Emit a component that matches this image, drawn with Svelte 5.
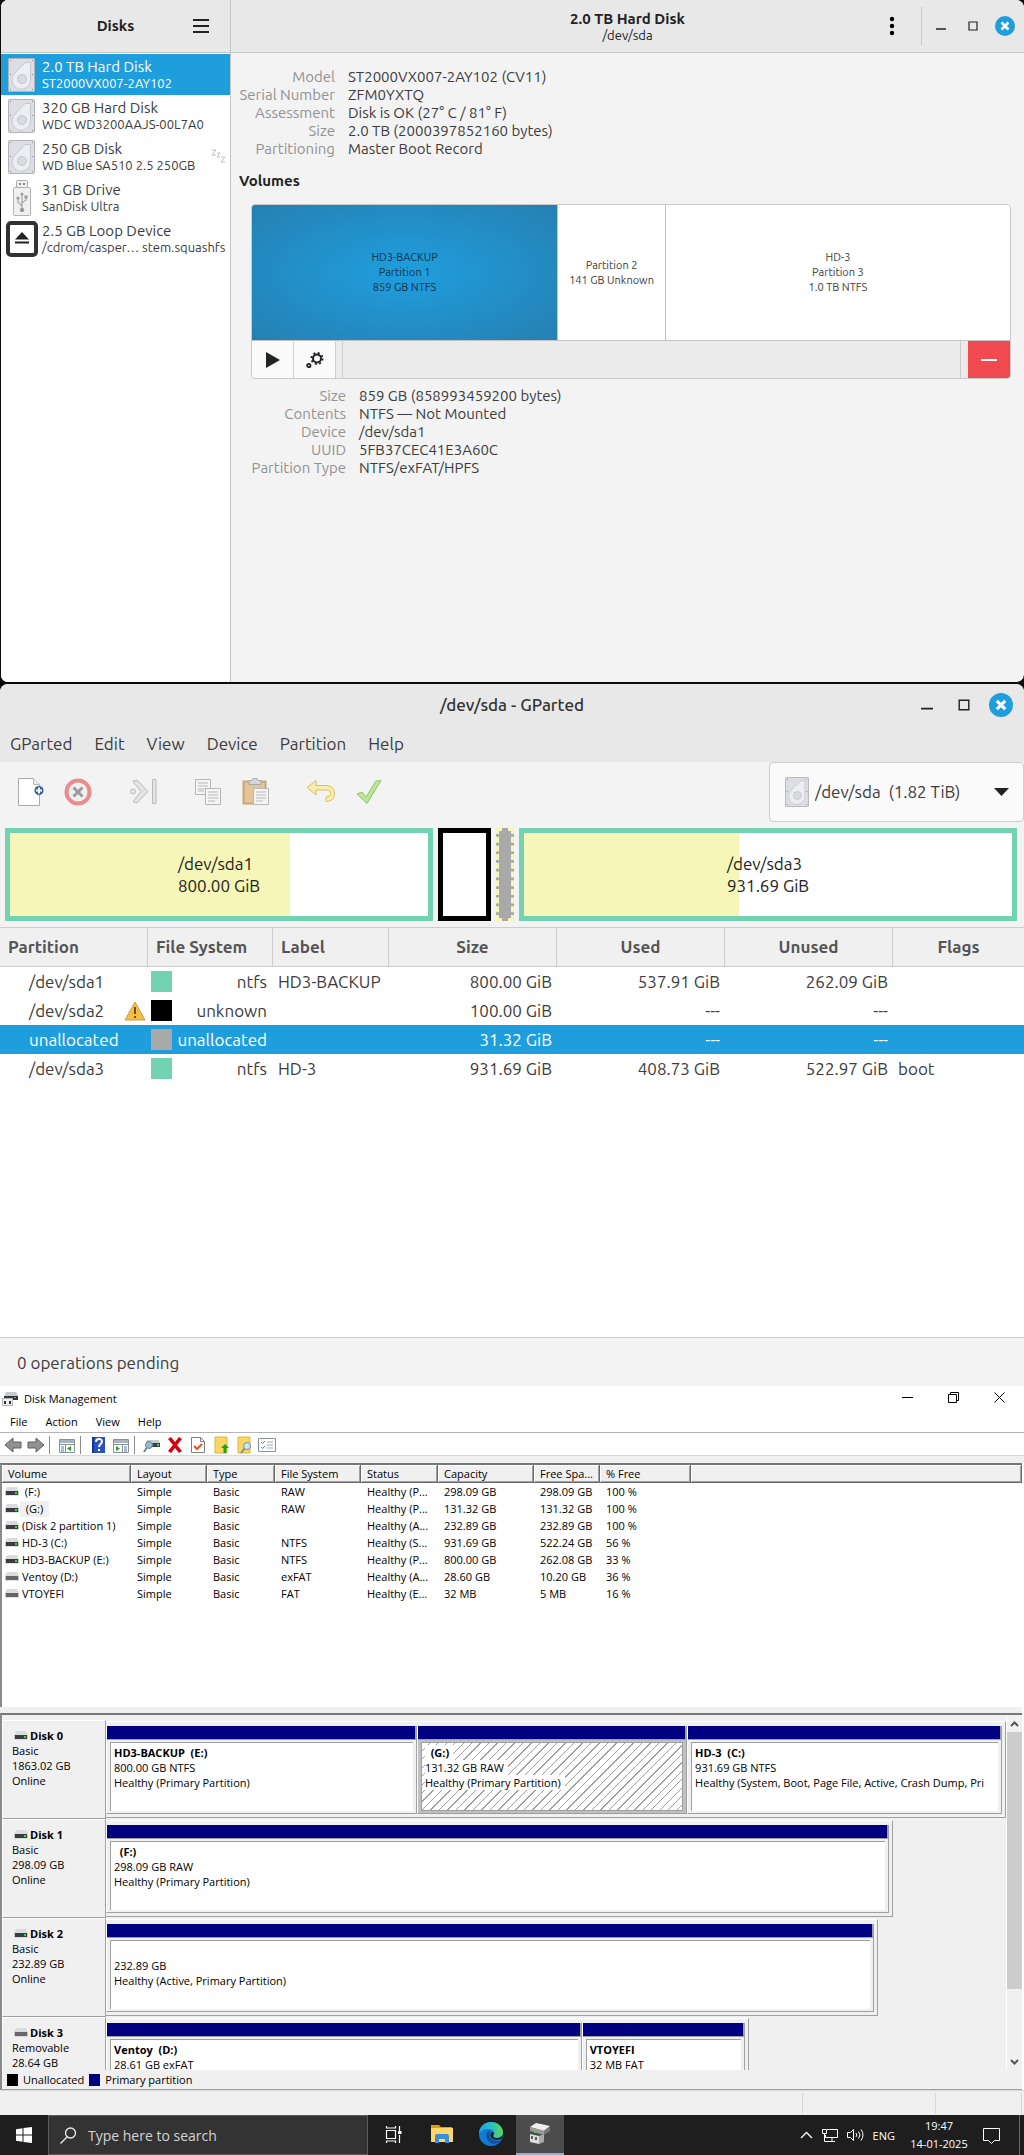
<script lang="ts">
	const drives = [
		{ name: '2.0 TB Hard Disk', model: 'ST2000VX007-2AY102', icon: 'hdd' },
		{ name: '320 GB Hard Disk', model: 'WDC WD3200AAJS-00L7A0', icon: 'hdd' },
		{ name: '250 GB Disk', model: 'WD Blue SA510 2.5 250GB', icon: 'hdd', asleep: true },
		{ name: '31 GB Drive', model: 'SanDisk Ultra', icon: 'usb' },
		{ name: '2.5 GB Loop Device', model: '/cdrom/casper… stem.squashfs', icon: 'loop' }
	];

	const driveInfo = [
		['Model', 'ST2000VX007-2AY102 (CV11)'],
		['Serial Number', 'ZFM0YXTQ'],
		['Assessment', 'Disk is OK (27° C / 81° F)'],
		['Size', '2.0 TB (2000397852160 bytes)'],
		['Partitioning', 'Master Boot Record']
	];

	const volumes = [
		{ lines: ['HD3-BACKUP', 'Partition 1', '859 GB NTFS'], share: 306 },
		{ lines: ['Partition 2', '141 GB Unknown'], share: 107 },
		{ lines: ['HD-3', 'Partition 3', '1.0 TB NTFS'], share: 345 }
	];

	const volumeInfo = [
		['Size', '859 GB (858993459200 bytes)'],
		['Contents', 'NTFS — Not Mounted'],
		['Device', '/dev/sda1'],
		['UUID', '5FB37CEC41E3A60C'],
		['Partition Type', 'NTFS/exFAT/HPFS']
	];

	const gpartedMenus = ['GParted', 'Edit', 'View', 'Device', 'Partition', 'Help'];

	const gpartedBars = [
		{ kind: 'ntfs', name: '/dev/sda1', size: '800.00 GiB', share: 418, used: 67 },
		{ kind: 'unknown', name: '', size: '', share: 43, used: 0 },
		{ kind: 'unallocated', name: '', size: '', share: 12, used: 0 },
		{ kind: 'ntfs', name: '/dev/sda3', size: '931.69 GiB', share: 488, used: 44 }
	];

	const partitions = [
		{ name: '/dev/sda1', fs: 'ntfs', label: 'HD3-BACKUP', size: '800.00 GiB', used: '537.91 GiB', unused: '262.09 GiB', flags: '' },
		{ name: '/dev/sda2', fs: 'unknown', label: '', size: '100.00 GiB', used: '---', unused: '---', flags: '', warn: true },
		{ name: 'unallocated', fs: 'unallocated', label: '', size: '31.32 GiB', used: '---', unused: '---', flags: '' },
		{ name: '/dev/sda3', fs: 'ntfs', label: 'HD-3', size: '931.69 GiB', used: '408.73 GiB', unused: '522.97 GiB', flags: 'boot' }
	];

	const mmcMenus = ['File', 'Action', 'View', 'Help'];
	const mmcTools = ['back', 'forward', '|', 'tree', '|', 'help', 'panel', '|', 'connect', 'delete', 'check', 'up', 'find', 'list'];
	const volumeColumns = ['Volume', 'Layout', 'Type', 'File System', 'Status', 'Capacity', 'Free Spa...', '% Free'];

	const volumeRows = [
		[' (F:)', 'Simple', 'Basic', 'RAW', 'Healthy (P...', '298.09 GB', '298.09 GB', '100 %'],
		[' (G:)', 'Simple', 'Basic', 'RAW', 'Healthy (P...', '131.32 GB', '131.32 GB', '100 %'],
		['(Disk 2 partition 1)', 'Simple', 'Basic', '', 'Healthy (A...', '232.89 GB', '232.89 GB', '100 %'],
		['HD-3 (C:)', 'Simple', 'Basic', 'NTFS', 'Healthy (S...', '931.69 GB', '522.24 GB', '56 %'],
		['HD3-BACKUP (E:)', 'Simple', 'Basic', 'NTFS', 'Healthy (P...', '800.00 GB', '262.08 GB', '33 %'],
		['Ventoy (D:)', 'Simple', 'Basic', 'exFAT', 'Healthy (A...', '28.60 GB', '10.20 GB', '36 %'],
		['VTOYEFI', 'Simple', 'Basic', 'FAT', 'Healthy (E...', '32 MB', '5 MB', '16 %']
	];

	const disks = [
		{
			name: 'Disk 0', type: 'Basic', size: '1863.02 GB', state: 'Online', width: 100,
			parts: [
				{ name: 'HD3-BACKUP  (E:)', size: '800.00 GB NTFS', status: 'Healthy (Primary Partition)', share: 311 },
				{ name: '  (G:)', size: '131.32 GB RAW', status: 'Healthy (Primary Partition)', share: 270, selected: true },
				{ name: 'HD-3  (C:)', size: '931.69 GB NTFS', status: 'Healthy (System, Boot, Page File, Active, Crash Dump, Pri', share: 315 }
			]
		},
		{
			name: 'Disk 1', type: 'Basic', size: '298.09 GB', state: 'Online', width: 87.4,
			parts: [{ name: '  (F:)', size: '298.09 GB RAW', status: 'Healthy (Primary Partition)', share: 1 }]
		},
		{
			name: 'Disk 2', type: 'Basic', size: '232.89 GB', state: 'Online', width: 85.8,
			parts: [{ name: ' ', size: '232.89 GB', status: 'Healthy (Active, Primary Partition)', share: 1 }]
		},
		{
			name: 'Disk 3', type: 'Removable', size: '28.64 GB', state: '', width: 71.4, removable: true,
			parts: [
				{ name: 'Ventoy  (D:)', size: '28.61 GB exFAT', status: '', share: 477 },
				{ name: 'VTOYEFI', size: '32 MB FAT', status: '', share: 162 }
			]
		}
	];

	let selectedDrive = $state(0);
	let selectedVolume = $state(0);
	let selectedPartition = $state(2);
	let search = $state('');
</script>

{#snippet hdd()}
	<svg class="hdd" viewBox="0 0 27 34" aria-hidden="true">
		<rect x=".5" y=".5" width="26" height="33" rx="1" fill="#dcdee3" stroke="#b0b2b8" />
		<path d="M17 4.5h5.5v17.500a9.200 9.200 0 1 1-16.800-5.200C8 13 13.500 9 17 4.500z" fill="#eceef2" stroke="#c6c8ce" />
		<circle cx="14" cy="21" r="4.500" fill="#d9dbe0" stroke="#c3c5cb" />
		<path d="M2 2h1v1H2zM24 2h1v1h-1zM2 16h1v1H2zM24 16h1v1h-1zM2 31h1v1H2zM24 31h1v1h-1z" fill="#85878d" />
	</svg>
{/snippet}

{#snippet controls(size: number)}
	<button type="button" aria-label="Minimize">
		<svg width={size} height={size} viewBox="0 0 20 20"><path d="M5 13h10" stroke="#222" stroke-width="1.500" /></svg>
	</button>
	<button type="button" aria-label="Maximize">
		<svg width={size} height={size} viewBox="0 0 20 20"><path d="M6 6h8v8H6z" fill="none" stroke="#222" stroke-width="1.200" /></svg>
	</button>
	<button type="button" aria-label="Close">
		<svg width={size} height={size} viewBox="0 0 20 20">
			<circle cx="10" cy="10" r="10" fill="#1f9ede" />
			<path d="M6.500 6.500l7 7M13.500 6.500l-7 7" stroke="#fff" stroke-width="2.600" />
		</svg>
	</button>
{/snippet}

{#snippet winDrive(removable = false)}
	<svg class="win-drive" width="14" height="9" viewBox="0 0 14 9" aria-hidden="true">
		<path d="M2 0h10l2 4H0z" fill="#d9dbde" />
		<path d="M0 4h14v4.500H0z" fill="#c3c5c8" />
		<path d="M1 4h12v4H1z" fill={removable ? '#666' : '#3a3d40'} />
		{#if !removable}<path d="M10 5h2v2h-2z" fill="#2fe03c" />{/if}
	</svg>
{/snippet}

<div class="desktop">
	<section class="disks" aria-label="Disks">
		<aside>
			<header class="side-head">
				<h2>Disks</h2>
				<button type="button" aria-label="Menu">
					<svg width="16" height="16" viewBox="0 0 16 16"><path d="M0 2h16M0 8h16M0 14h16" stroke="#222" stroke-width="2" /></svg>
				</button>
			</header>
			{#each drives as drive, i}
				<button type="button" class="drive" class:selected={selectedDrive === i} onclick={() => (selectedDrive = i)}>
					<span class="drive-icon">
						{#if drive.icon === 'hdd'}
							{@render hdd()}
						{:else if drive.icon === 'usb'}
							<svg width="20" height="36" viewBox="0 0 20 36">
								<path d="M4.500 8V1.500q0-1 1-1h9q1 0 1 1V8" fill="#f1f1f1" stroke="#aaa" />
								<path d="M7 3h2v2H7zM11 3h2v2h-2z" fill="#888" />
								<rect x="1.500" y="7.500" width="17" height="28" rx="1" fill="#f0f0f0" stroke="#b3b3b3" />
								<path d="M10 30V14M10 26l-4-4v-4M10 23l4-3v-3" fill="none" stroke="#aaa" stroke-width="1.300" />
								<path d="M8 15l2-3 2 3zM12.500 15.500h3v3h-3z" fill="#999" />
								<circle cx="6" cy="18" r="1.500" fill="#999" /><circle cx="10" cy="30" r="2.200" fill="#999" />
							</svg>
						{:else}
							<svg width="32" height="36" viewBox="0 0 32 36">
								<rect x="2" y="2" width="28" height="32" rx="3" fill="#fff" stroke="#303234" stroke-width="4" />
								<path d="M16 11l7 7.500H9zM9 20.500h14v2H9z" fill="#222" />
							</svg>
						{/if}
					</span>
					<span class="drive-text">
						<span class="drive-name">{drive.name}</span>
						<span class="drive-model">{drive.model}</span>
					</span>
					{#if drive.asleep}
						<svg class="zzz" width="15" height="15" viewBox="0 0 15 15" aria-label="Sleeping">
							<path d="M1 1h4L1 6h4M6 4h3L6 8h3M10 8h4l-4 5h4" fill="none" stroke="#c0c0c0" />
						</svg>
					{/if}
				</button>
			{/each}
		</aside>

		<div class="disks-main">
			<header class="main-head">
				<div class="main-title">
					<h1>2.0 TB Hard Disk</h1>
					<p>/dev/sda</p>
				</div>
				<div class="head-end">
					<button type="button" class="kebab" aria-label="Drive options">
						<svg width="6" height="20" viewBox="0 0 6 20"><circle cx="3" cy="3" r="2.200" /><circle cx="3" cy="10" r="2.200" /><circle cx="3" cy="17" r="2.200" /></svg>
					</button>
					<div class="window-buttons">{@render controls(20)}</div>
				</div>
			</header>

			<div class="disks-body">
				<dl>
					{#each driveInfo as [term, value]}
						<dt>{term}</dt>
						<dd>{value}</dd>
					{/each}
				</dl>
				<h3>Volumes</h3>
				<div class="volume-box">
					<div class="volume-map">
						{#each volumes as volume, i}
							<button type="button" class:selected={selectedVolume === i} style="flex-grow: {volume.share}" onclick={() => (selectedVolume = i)}>
								{#each volume.lines as line}<span>{line}</span>{/each}
							</button>
						{/each}
					</div>
					<div class="volume-tools">
						<button type="button" aria-label="Mount">
							<svg width="16" height="16" viewBox="0 0 16 16"><path d="M1 0l14 8-14 8z" fill="#222" /></svg>
						</button>
						<button type="button" aria-label="Partition options">
							<svg width="18" height="18" viewBox="0 0 18 18" fill="none" stroke="#222">
								<circle cx="11" cy="7.500" r="4" stroke-width="2" />
								<circle cx="11" cy="7.500" r="5.600" stroke-width="1.800" stroke-dasharray="2 2.400" />
								<circle cx="2.800" cy="14.500" r="1.700" stroke-width="1.800" />
							</svg>
						</button>
						<span class="tool-fill"></span>
						<button type="button" class="remove" aria-label="Delete partition">
							<svg width="16" height="16" viewBox="0 0 16 16"><path d="M0 8h16" stroke="#fff" stroke-width="2" /></svg>
						</button>
					</div>
				</div>
				<dl class="volume-info">
					{#each volumeInfo as [term, value]}
						<dt>{term}</dt>
						<dd>{value}</dd>
					{/each}
				</dl>
			</div>
		</div>
	</section>

	<section class="gparted" aria-label="GParted">
		<header class="gp-head">
			<h1>/dev/sda - GParted</h1>
			<div class="gp-buttons">{@render controls(24)}</div>
		</header>
		<nav class="gp-menu">
			{#each gpartedMenus as menu}<button type="button">{menu}</button>{/each}
		</nav>

		<div class="gp-toolbar">
			<button type="button" aria-label="New">
				<svg width="28" height="30" viewBox="0 0 28 30">
					<path d="M2.500 1.500h15l6 6v21h-21z" fill="#fff" stroke="#aaa" /><path d="M17.500 1.500v6h6" fill="#eee" stroke="#bbb" />
					<circle cx="23" cy="13.500" r="4.500" fill="#34609f" /><path d="M23 10.500v6M20 13.500h6" stroke="#fff" stroke-width="2" />
				</svg>
			</button>
			<button type="button" aria-label="Delete">
				<svg width="28" height="28" viewBox="0 0 28 28">
					<circle cx="14" cy="14" r="11.500" fill="#f0f0f0" stroke="#e98c8c" stroke-width="4" />
					<path d="M9.500 9.500l9 9M18.500 9.500l-9 9" stroke="#9b9b9b" stroke-width="3" />
				</svg>
			</button>
			<button type="button" class="group" aria-label="Resize/Move">
				<svg width="28" height="28" viewBox="0 0 28 28" fill="#e4e4e4" stroke="#bbb">
					<circle cx="4" cy="13.500" r="2.500" /><path d="M4 3.500l4-1.500 11 11.500L8 25l-4-1.500 8-10z" /><path d="M23.500 1.500h3.500v24h-3.500z" />
				</svg>
			</button>
			<button type="button" class="group" aria-label="Copy">
				<svg width="28" height="28" viewBox="0 0 28 28" fill="#f4f4f4" stroke="#b7b7b7">
					<path d="M1.500 1.500h15v15h-15z" /><path d="M4 5h10M4 8h10M4 11h8M4 13h6" /><path d="M11.500 10.500h15v16h-15z" /><path d="M14 14h10M14 17h10M14 20h10M14 23h7" />
				</svg>
			</button>
			<button type="button" aria-label="Paste">
				<svg width="28" height="28" viewBox="0 0 28 28">
					<path d="M1.500 3.500h22v22h-22z" fill="#e4c498" stroke="#c8a878" stroke-width="2" />
					<path d="M7 2.500h3l1-2h4l1 2h3v4H7z" fill="#d6d6d6" stroke="#aaa" />
					<path d="M11.500 10.500h15v16h-15z" fill="#f4f4f4" stroke="#b7b7b7" /><path d="M14 14h10M14 17h10M14 20h10M14 23h7" stroke="#bbb" />
				</svg>
			</button>
			<button type="button" class="group" aria-label="Undo">
				<svg width="30" height="26" viewBox="0 0 30 26">
					<path d="M10 1.500v5h9c6 0 9.500 3 9.500 8 0 5-3 8-8.500 8v-4.500c3 0 4.500-1 4.500-3.500 0-2.300-1.500-3.500-4.500-3.500h-10v5l-9-7.500z" fill="#f7eeac" stroke="#d9bd66" />
				</svg>
			</button>
			<button type="button" aria-label="Apply">
				<svg width="26" height="26" viewBox="0 0 26 26"><path d="M1 15l5-2 4 5L20 2l5-.5L11 24.500z" fill="#b9e697" stroke="#8fc46c" stroke-linejoin="round" /></svg>
			</button>
			<div class="device-select">
				{@render hdd()}
				<select aria-label="Device"><option>/dev/sda&nbsp;&nbsp;(1.82 TiB)</option></select>
				<svg width="15" height="8" viewBox="0 0 15 8" aria-hidden="true"><path d="M0 0h15L7.500 8z" fill="#222" /></svg>
			</div>
		</div>

		<div class="gp-bars">
			{#each gpartedBars as bar}
				<div class="gp-bar {bar.kind}" style="flex-grow: {bar.share}; --used: {bar.used}%">
					{#if bar.name}<p>{bar.name}<br />{bar.size}</p>{/if}
				</div>
			{/each}
		</div>

		<div class="gp-list">
			<table>
				<colgroup>
					<col class="c-part" /><col class="c-fs" /><col class="c-label" /><col class="c-num" /><col class="c-num" /><col class="c-num" /><col />
				</colgroup>
				<thead>
					<tr><th>Partition</th><th>File System</th><th>Label</th><th class="mid">Size</th><th class="mid">Used</th><th class="mid">Unused</th><th class="mid">Flags</th></tr>
				</thead>
				<tbody>
					{#each partitions as part, i}
						<tr class:selected={selectedPartition === i} onclick={() => (selectedPartition = i)}>
							<td>
								<div class="part-name">
									{part.name}
									{#if part.warn}
										<svg width="22" height="20" viewBox="0 0 22 20" aria-label="Warning">
											<path d="M11 1l10 18H1z" fill="#f6bd3f" stroke="#c99a52" stroke-linejoin="round" /><path d="M11 6v7M11 15v2" stroke="#6b4e16" stroke-width="2" />
										</svg>
									{/if}
								</div>
							</td>
							<td><div class="fs"><span class="swatch {part.fs}"></span>{part.fs}</div></td>
							<td>{part.label}</td>
							<td class="num">{part.size}</td>
							<td class="num">{part.used}</td>
							<td class="num">{part.unused}</td>
							<td>{part.flags}</td>
						</tr>
					{/each}
				</tbody>
			</table>
		</div>
		<footer>0 operations pending</footer>
	</section>
</div>

<section class="mmc" aria-label="Disk Management">
	<header class="mmc-head">
		<svg width="16" height="16" viewBox="0 0 16 16" aria-hidden="true">
			<path d="M4 1h10l2 4H2z" fill="#c8cacc" /><path d="M2 5h14v4H2z" fill="#34373a" /><path d="M12 6h2v1h-2z" fill="#2fe03c" />
			<path d="M0 7h11v8H0z" fill="#b4b6b8" /><path d="M1 8h9v6H1z" fill="#f0f0f0" /><path d="M2 10h2v3H2zM7 10h2v3H7z" fill="#333" />
		</svg>
		<h1>Disk Management</h1>
		<div class="mmc-buttons">
			<button type="button" aria-label="Minimize"><svg width="11" height="11" viewBox="0 0 11 11"><path d="M0 5.500h11" stroke="#000" /></svg></button>
			<button type="button" aria-label="Restore"><svg width="11" height="11" viewBox="0 0 11 11"><path d="M.5 2.500h8v8h-8zM2.500 2.500v-2h8v8h-2" fill="none" stroke="#000" /></svg></button>
			<button type="button" aria-label="Close"><svg width="11" height="11" viewBox="0 0 11 11"><path d="M.5.5l10 10M10.500.5l-10 10" stroke="#000" /></svg></button>
		</div>
	</header>
	<nav class="mmc-menu">
		{#each mmcMenus as menu}<button type="button">{menu}</button>{/each}
	</nav>
	<div class="mmc-toolbar">
		{#each mmcTools as tool}
			{#if tool === '|'}
				<span class="sep"></span>
			{:else}
				<button type="button" aria-label={tool}>
					<svg width="18" height="18" viewBox="0 0 18 18">
						{#if tool === 'back'}
							<path d="M1 9l8-7v4h8v6H9v4z" fill="#929292" stroke="#5f5f5f" />
						{:else if tool === 'forward'}
							<path d="M17 9L9 2v4H1v6h8v4z" fill="#929292" stroke="#5f5f5f" />
						{:else if tool === 'tree' || tool === 'panel'}
							<path d="M1.500 3.500h15v13h-15z" fill="#fff" stroke="#8a9099" /><path d="M2 4h14v3H2z" fill="#aab2bd" /><path d="M2 8.500h14" stroke="#8a9099" />
							{#if tool === 'tree'}
								<path d="M3 11h3M3 13h3M3 15h3" stroke="#4a7ebb" /><path d="M7.500 9v7" stroke="#8a9099" /><path d="M13 10v5l-4-2.500z" fill="#2fa02f" />
							{:else}
								<path d="M12 11h3M12 13h3M12 15h3" stroke="#4a7ebb" /><path d="M10.500 9v7" stroke="#8a9099" /><path d="M4 10v5l4-2.500z" fill="#2fa02f" />
							{/if}
						{:else if tool === 'help'}
							<path d="M3 1h13v16H3z" fill="#2b50c4" /><path d="M3 1h2v16H3z" fill="#1b3585" />
							<path d="M7 6c0-4 6-4 6-.5 0 2.500-3 2.500-3 5.500M10 13v2" fill="none" stroke="#fff" stroke-width="2" />
						{:else if tool === 'connect'}
							<path d="M4 4h12l1 3H3z" fill="#c8cacc" /><path d="M7 7h10v4H7z" fill="#3b3e42" /><path d="M14 8h2v2h-2z" fill="#2fe03c" />
							<circle cx="6" cy="9" r="3.500" fill="#93bcd6" stroke="#6f8290" /><path d="M3.500 12L1 16" stroke="#7d8890" stroke-width="2" />
						{:else if tool === 'delete'}
							<path d="M2 3l3-2 4 5 4-5 3 2-5 6 5 6-3 2-4-5-4 5-3-2 5-6z" fill="#d8000f" />
						{:else if tool === 'check'}
							<path d="M2.500 1.500h9l4 4v11h-13z" fill="#fff" stroke="#7f7f7f" /><path d="M11.500 1.500v4h4" fill="none" stroke="#7f7f7f" /><path d="M5 10l3 3 5-5" fill="none" stroke="#e8531c" stroke-width="2" />
						{:else if tool === 'up'}
							<path d="M3 1h12v16H3z" fill="#f9d765" stroke="#dfb53a" /><path d="M13 8l4 4h-2.500v5h-3v-5H9z" fill="#16a516" />
						{:else if tool === 'find'}
							<path d="M3 1h12v16H3z" fill="#f9d765" stroke="#dfb53a" /><circle cx="12" cy="10" r="3.500" fill="#cfe6f5" stroke="#6f93ad" /><path d="M9.500 12.500L6 17" stroke="#6f93ad" stroke-width="2" />
						{:else}
							<path d="M.5 2.500h17v13H.5z" fill="#fff" stroke="#8a9099" /><path d="M9 6h6M9 9h6M9 12h6" stroke="#a0a8b3" /><path d="M3 6l1.500 1.500L7 5M3 11l1.500 1.500L7 10" fill="none" stroke="#3d83cf" />
						{/if}
					</svg>
				</button>
			{/if}
		{/each}
	</div>

	<div class="mmc-content">
		<div class="volume-list">
			<table>
				<colgroup>
					<col class="w-volume" /><col class="w-layout" /><col class="w-type" /><col class="w-fs" /><col class="w-status" /><col class="w-cap" /><col class="w-free" /><col class="w-pct" /><col />
				</colgroup>
				<thead>
					<tr>{#each volumeColumns as column}<th>{column}</th>{/each}<th></th></tr>
				</thead>
				<tbody>
					{#each volumeRows as row, i}
						<tr>
							{#each row as cell, j}
								{#if j === 0}
									<td class="vol">{@render winDrive(i > 4)}<span class:focused={i === 1}>{cell}</span></td>
								{:else}
									<td>{cell}</td>
								{/if}
							{/each}
							<td></td>
						</tr>
					{/each}
				</tbody>
			</table>
		</div>

		<div class="disk-pane">
			<div class="disk-rows">
				{#each disks as disk}
					<div class="disk-row">
						<div class="disk-label">
							<h4>{@render winDrive(disk.removable)}{disk.name}</h4>
							<p>{disk.type}</p>
							<p>{disk.size}</p>
							{#if disk.state}<p>{disk.state}</p>{/if}
						</div>
						<div class="track-area">
							<div class="track" style="width: {disk.width}%">
								{#each disk.parts as part}
									<div class="part" class:selected={part.selected} style="flex-grow: {part.share}">
										<div class="stripe"></div>
										<div class="part-body">
											<div class="part-inner">
												<p><b>{part.name}</b></p>
												<p><span>{part.size}</span></p>
												{#if part.status}<p><span>{part.status}</span></p>{/if}
											</div>
										</div>
									</div>
								{/each}
							</div>
						</div>
					</div>
				{/each}
			</div>
			<div class="scrollbar">
				<button type="button" aria-label="Scroll up"><svg width="9" height="6" viewBox="0 0 9 6"><path d="M1 5l3.500-3.500L8 5" fill="none" stroke="#555" stroke-width="2" /></svg></button>
				<div class="thumb"></div>
				<button type="button" aria-label="Scroll down"><svg width="9" height="6" viewBox="0 0 9 6"><path d="M1 1l3.500 3.500L8 1" fill="none" stroke="#555" stroke-width="2" /></svg></button>
			</div>
		</div>
		<div class="legend">
			<span class="key"></span>Unallocated
			<span class="key primary"></span>Primary partition
		</div>
	</div>
	<div class="mmc-status"><span></span><span></span><span></span></div>
</section>

<footer class="taskbar">
	<button type="button" class="start" aria-label="Start">
		<svg width="16" height="16" viewBox="0 0 16 16"><path d="M0 2.200l6.500-.9v6.200H0zM7.500 1.100L16 0v7.500H7.500zM0 8.500h6.500v6.200L0 13.800zM7.500 8.500H16V16l-8.500-1.100z" fill="#fff" /></svg>
	</button>
	<label class="search">
		<svg width="17" height="17" viewBox="0 0 17 17" aria-hidden="true"><circle cx="10.500" cy="6" r="5" fill="none" stroke="#eee" stroke-width="1.300" /><path d="M7 10l-6.500 6.500" stroke="#eee" stroke-width="1.300" /></svg>
		<input type="text" placeholder="Type here to search" aria-label="Search" bind:value={search} />
	</label>
	<button type="button" class="task" aria-label="Task View">
		<svg width="17" height="17" viewBox="0 0 17 17" fill="none" stroke="#fff" stroke-width="1.200"><path d="M1.500 4.500h9v8h-9zM1.500 0v2h9V0M1.500 17v-2h9v2M14.500 0v5M14.500 9v8" /><path d="M13 5h3.500v3H13z" fill="#fff" stroke="none" /></svg>
	</button>
	<button type="button" class="task" aria-label="File Explorer">
		<svg width="22" height="20" viewBox="0 0 22 20"><path d="M0 1h8l2 2h11v4H0z" fill="#e39b12" /><path d="M0 4h22v14H0z" fill="#ffd766" /><path d="M4 19v-7q0-2 2-2h10q2 0 2 2v7h-4v-4H8v4z" fill="#3b8fd8" /></svg>
	</button>
	<button type="button" class="task" aria-label="Microsoft Edge">
		<svg width="24" height="24" viewBox="0 0 24 24">
			<defs>
				<linearGradient id="edge-top" x1="0" x2="1"><stop offset="0" stop-color="#1aa3e8" /><stop offset=".6" stop-color="#2fc3b4" /><stop offset="1" stop-color="#62d648" /></linearGradient>
			</defs>
			<circle cx="12" cy="12" r="12" fill="#0f7bd4" />
			<path d="M0 12C0 5 5 0 12 0s12 5 12 10c0 4-3 6-6 6-3.500 0-4.500-1.500-3.500-3 1.500-3-.5-6-5-6C5 7 1.500 9 0 12z" fill="url(#edge-top)" />
			<path d="M9.500 9C6 12 7 19 13 21.500c3.500 1 7-.5 9-3.500-5 2.500-12 0-11.500-5.500 0-1.500.5-2.500 1-3z" fill="#134e9b" />
			<path d="M14.500 13c-1 1.500 0 3 3.500 3 2 0 4-.8 5.300-2.500L22.500 17c-6 2-11 0-11-4 0-2 1-3 2-3 1.500 0 2 1.500 1 3z" fill="#1e1e1e" />
		</svg>
	</button>
	<button type="button" class="task active" aria-label="Disk Management">
		<svg width="22" height="22" viewBox="0 0 22 22"><path d="M1 4l6-4 14 3-6 5z" fill="#eee" /><path d="M1 4l14 4v4L1 8z" fill="#9a9a9a" /><path d="M15 8l6-5v5l-6 4z" fill="#777" /><path d="M5 8h2v2H5z" fill="#2fe03c" /><path d="M1 11l9 2v8l-9-2z" fill="#ddd" /><path d="M10 13l5-2v8l-5 2z" fill="#aaa" /><path d="M3 13v3M7 14v3" stroke="#333" stroke-width="1.500" /></svg>
	</button>
	<div class="tray">
		<svg width="13" height="8" viewBox="0 0 13 8"><path d="M1 7l5.500-5.500L12 7" fill="none" stroke="#fff" stroke-width="1.300" /></svg>
		<svg width="16" height="15" viewBox="0 0 16 15" fill="none" stroke="#fff"><path d="M5 1.500h10.500v8H3.500V7M10 10v3M6 13.500h7M.5 1.500h4v4h-4zM2.500 6v7.500H6" /></svg>
		<svg width="17" height="14" viewBox="0 0 17 14" fill="none" stroke="#fff"><path d="M.5 4.500h3l3-3v11l-3-3h-3zM9 5q1.500 2 0 4M11.500 3.500q3 3.500 0 7M14 1.500q4 5.500 0 11" /></svg>
		<span class="lang">ENG</span>
		<div class="clock"><time>19:47</time><time>14-01-2025</time></div>
		<svg width="17" height="17" viewBox="0 0 17 17"><path d="M.5 1.500h16v12h-5l-3 3-3-3h-5z" fill="none" stroke="#fff" /></svg>
		<span class="peek"></span>
	</div>
</footer>

<style>
	:global(body) {
		margin: 0;
		background: #f0f0f0;
	}

	h1,
	h2,
	h3,
	h4,
	p,
	dl,
	dd {
		margin: 0;
	}

	button {
		display: flex;
		align-items: center;
		justify-content: center;
		padding: 0;
		border: none;
		background: none;
		color: inherit;
		font: inherit;
		white-space: nowrap;
	}

	svg {
		flex-shrink: 0;
	}

	section {
		box-sizing: border-box;
	}

	.desktop {
		background: #0b0b0b;
		color: #3c3c3c;
		font-family: Ubuntu, 'Noto Sans', sans-serif;
	}

	/* Disks */
	.disks {
		display: flex;
		min-height: 683px;
		border-left: 1px solid #0b0b0b;
		border-bottom: 1px solid #0b0b0b;
		background: #f3f3f3;
		border-radius: 8px;
		overflow: hidden;
		font-size: 15px;
		line-height: 18px;
	}

	aside {
		width: 229px;
		flex-shrink: 0;
		background: #fff;
		border-right: 1px solid #c6c6c6;
	}

	.side-head,
	.main-head {
		height: 52px;
		background: #e8e8e8;
		border-bottom: 1px solid #c6c6c6;
		display: flex;
		align-items: center;
		justify-content: center;
		color: #222;
	}

	.side-head {
		position: relative;
		margin-bottom: 1px;
	}

	.side-head h2,
	.main-head h1,
	h3 {
		font-size: 15px;
		font-weight: 600;
		line-height: 18px;
	}

	.side-head button {
		position: absolute;
		right: 21px;
	}

	.drive {
		width: 100%;
		height: 41px;
		justify-content: flex-start;
		text-align: left;
		position: relative;
	}

	.drive.selected {
		background: #1f9ede;
		color: #fff;
	}

	.drive-icon {
		width: 41px;
		display: flex;
		justify-content: center;
		flex-shrink: 0;
	}

	.hdd {
		width: 27px;
		height: 34px;
	}

	.drive-text {
		display: flex;
		flex-direction: column;
	}

	.drive-name {
		line-height: 17px;
	}

	.drive-model {
		font-size: 13px;
		line-height: 16px;
	}

	.zzz {
		position: absolute;
		right: 4px;
	}

	.disks-main {
		flex: 1;
		min-width: 0;
	}

	.main-head {
		display: grid;
		grid-template-columns: 1fr auto 1fr;
	}

	.main-title {
		grid-column: 2;
		text-align: center;
	}

	.main-head p {
		font-size: 13px;
		line-height: 15px;
	}

	.head-end,
	.window-buttons {
		display: flex;
		align-items: center;
		justify-content: flex-end;
	}

	.kebab {
		margin-right: 26px;
	}

	.window-buttons {
		gap: 12px;
		height: 38px;
		padding: 0 9px;
		border-left: 1px solid #c8c8c8;
	}

	.disks-body {
		padding: 15px 13px 15px 8px;
	}

	dl {
		display: grid;
		grid-template-columns: 96px 1fr;
		column-gap: 13px;
	}

	dt {
		color: #929292;
		text-align: right;
		white-space: nowrap;
	}

	h3 {
		margin: 14px 0;
		color: #222;
	}

	.volume-box {
		margin-left: 12px;
		border: 1px solid #c9c9c9;
		border-radius: 4px;
		overflow: hidden;
		background: #ebebeb;
	}

	.volume-map {
		display: flex;
		height: 135px;
		border-bottom: 1px solid #c2c2c2;
	}

	.volume-map button {
		flex: 1 1 0;
		flex-direction: column;
		background: #fff;
		border-left: 1px solid #c2c2c2;
		font-size: 11px;
		line-height: 15px;
	}

	.volume-map button:first-child {
		border-left: none;
	}

	.volume-map .selected {
		background: radial-gradient(#1f9ede, #2680b2);
		color: #10334a;
	}

	.volume-tools {
		display: flex;
		height: 37px;
	}

	.volume-tools button {
		width: 42px;
		background: #fafafa;
		border-right: 1px solid #d0d0d0;
	}

	.tool-fill {
		flex: 1;
		margin: 0 7px 0 6px;
		border: 1px solid #cdcdcd;
		border-width: 0 1px;
	}

	.volume-tools .remove {
		background: #f04a50;
		border: none;
	}

	.volume-info {
		margin: 8px 0 0 11px;
	}

	/* GParted */
	.gparted {
		margin-top: 1px;
		background: #f3f3f3;
		border-radius: 8px 8px 0 0;
		overflow: hidden;
		font-size: 17px;
		line-height: 22px;
	}

	.gp-head {
		display: grid;
		grid-template-columns: 1fr auto 1fr;
		align-items: center;
		height: 41px;
		background: #e8e8e8;
		color: #333;
	}

	.gp-head h1 {
		grid-column: 2;
		font-size: 17px;
		font-weight: 500;
	}

	.gp-buttons {
		display: flex;
		justify-content: flex-end;
		gap: 13px;
		padding-right: 11px;
	}

	.gp-menu {
		display: flex;
		gap: 22px;
		height: 37px;
		padding: 0 10px;
		background: #e8e8e8;
	}

	.gp-toolbar {
		display: flex;
		align-items: center;
		gap: 18px;
		padding-left: 15px;
		height: 60px;
	}

	.gp-toolbar > button {
		width: 30px;
	}

	.gp-toolbar .group {
		margin-left: 17px;
	}

	.device-select {
		display: flex;
		align-items: center;
		box-sizing: border-box;
		width: 255px;
		height: 60px;
		margin-left: auto;
		padding: 0 14px 0 15px;
		border: 1px solid #cdcdcd;
		border-radius: 4px;
		background: #fafafa;
	}

	.device-select .hdd {
		width: 24px;
		height: 30px;
	}

	.device-select select {
		flex: 1;
		min-width: 0;
		padding: 0 6px;
		border: none;
		appearance: none;
		background: none;
		color: inherit;
		font: inherit;
	}

	.gp-bars {
		display: flex;
		gap: 5px;
		padding: 6px 7px 6px 5px;
	}

	.gp-bar {
		flex: 1 1 0;
		box-sizing: border-box;
		display: flex;
		align-items: center;
		justify-content: center;
		height: 93px;
		border: 5px solid #73d2b2;
		background: #fff;
		color: #222;
	}

	.gp-bar.ntfs {
		background: linear-gradient(to right, #f6f6b8 var(--used), #fff var(--used));
	}

	.gp-bar.unknown {
		border-color: #000;
	}

	.gp-bar.unallocated {
		border: 3px dashed #f6f6b8;
		background: #a9a9a9;
	}

	.gp-list {
		min-height: 409px;
		border-top: 1px solid #cdcdcd;
		border-bottom: 1px solid #cdcdcd;
		background: #fff;
	}

	table {
		width: 100%;
		table-layout: fixed;
		border-collapse: separate;
		border-spacing: 0;
	}

	.c-part {
		width: 148px;
	}

	.c-fs {
		width: 125px;
	}

	.c-label {
		width: 116px;
	}

	.c-num {
		width: 168px;
	}

	.gp-list th {
		box-sizing: border-box;
		height: 39px;
		padding: 0 8px;
		background: #f0f0f0;
		border-right: 1px solid #cdcdcd;
		border-bottom: 1px solid #cdcdcd;
		color: #555;
		font-weight: 600;
		text-align: left;
		white-space: nowrap;
	}

	.gp-list th:last-child {
		border-right: none;
	}

	.gp-list th.mid {
		text-align: center;
	}

	.gp-list td {
		height: 29px;
		padding: 0 5px;
		white-space: nowrap;
	}

	.gp-list td.num {
		text-align: right;
	}

	.gp-list .selected {
		background: #1f9ede;
		color: #fff;
	}

	.part-name {
		display: flex;
		align-items: center;
		justify-content: space-between;
		padding-left: 24px;
		margin-right: -3px;
	}

	.fs {
		display: flex;
		align-items: center;
		justify-content: space-between;
		margin: 0 1px 0 -2px;
	}

	.swatch {
		width: 21px;
		height: 21px;
		background: #73d2b2;
	}

	.swatch.unknown {
		background: #000;
	}

	.swatch.unallocated {
		background: #a9a9a9;
	}

	.gparted footer {
		display: flex;
		align-items: center;
		height: 48px;
		padding: 2px 17px 0;
		box-sizing: border-box;
	}

	/* Disk Management */
	.mmc {
		background: #fff;
		color: #000;
		font-family: 'Segoe UI', 'Open Sans', sans-serif;
		font-size: 11px;
		line-height: 15px;
	}

	.mmc-head {
		display: flex;
		align-items: center;
		height: 25px;
		padding-left: 2px;
	}

	.mmc-head h1 {
		margin-left: 6px;
		font-size: 11px;
		font-weight: 400;
	}

	.mmc-buttons {
		display: flex;
		margin: 0 2px 0 auto;
		height: 22px;
		align-self: flex-start;
	}

	.mmc-buttons button {
		width: 46px;
	}

	.mmc-menu {
		display: flex;
		gap: 18px;
		height: 21px;
		padding: 0 10px;
		border-bottom: 1px solid #b4b4b4;
	}

	.mmc-toolbar {
		display: flex;
		align-items: center;
		gap: 3px;
		height: 23px;
		padding: 2px 3px 0;
		box-sizing: border-box;
		border-bottom: 1px solid #d8d8d8;
	}

	.mmc-toolbar button {
		width: 20px;
	}

	.sep {
		width: 1px;
		height: 18px;
		margin-right: 4px;
		background: #8c8c8c;
	}

	.mmc-content {
		border-top: 7px solid #f0f0f0;
	}

	.volume-list {
		min-height: 248px;
		margin-right: 2px;
		border-top: 2px solid #777;
		border-left: 2px solid #8a8a8a;
	}

	.w-volume {
		width: 129px;
	}

	.w-layout {
		width: 76px;
	}

	.w-type {
		width: 68px;
	}

	.w-fs {
		width: 86px;
	}

	.w-status {
		width: 77px;
	}

	.w-cap {
		width: 96px;
	}

	.w-free {
		width: 66px;
	}

	.w-pct {
		width: 91px;
	}

	.volume-list th {
		box-sizing: border-box;
		height: 18px;
		padding: 0 6px;
		background: #f0f0f0;
		border-right: 1px solid #696969;
		border-bottom: 1px solid #696969;
		box-shadow:
			inset 1px 1px #fff,
			inset -1px -1px #a0a0a0;
		font-weight: 400;
		text-align: left;
		white-space: nowrap;
	}

	.volume-list td {
		height: 17px;
		padding: 0 0 0 6px;
		white-space: pre;
	}

	.volume-list .vol {
		padding-left: 3px;
	}

	.vol span {
		padding: 0 3px 1px;
	}

	.vol .focused {
		margin-left: 1px;
		padding-right: 6px;
		background: #f0f0f0;
	}

	.disk-pane {
		display: flex;
		height: 355px;
		overflow: hidden;
		margin-right: 2px;
		border-top: 2px solid #777;
		border-left: 2px solid #8a8a8a;
		background: #f0f0f0;
		box-shadow: 0 -6px #f0f0f0;
	}

	.disk-rows {
		flex: 1;
		min-width: 0;
		padding-top: 5px;
	}

	.disk-row {
		display: flex;
		height: 99px;
	}

	.disk-label {
		box-sizing: border-box;
		width: 104px;
		flex-shrink: 0;
		padding: 7px 0 0 9px;
		border: 1px solid #fff;
		border-right: 1px solid #a0a0a0;
		border-bottom-color: #a0a0a0;
	}

	.disk-label h4 {
		display: flex;
		align-items: center;
		gap: 2px;
		padding-left: 2px;
		font-size: 11px;
		font-weight: 700;
	}

	.track-area {
		flex: 1;
		min-width: 0;
		padding: 1px 0;
	}

	.track {
		display: flex;
		height: 97px;
		box-sizing: border-box;
		padding: 4px 3px 3px 0;
		border-top: 1px solid #fff;
		border-right: 1px solid #a0a0a0;
		border-bottom: 1px solid #a0a0a0;
	}

	.part {
		display: flex;
		flex: 1 1 0;
		flex-direction: column;
		min-width: 0;
		border-left: 1px solid #fff;
		border-right: 1px solid #a0a0a0;
		border-bottom: 1px solid #a0a0a0;
	}

	.stripe {
		flex-shrink: 0;
		height: 13px;
		border-right: 1px solid #a0a0a0;
		border-bottom: 1px solid #a0a0a0;
		background: #000080;
	}

	.part-body {
		display: flex;
		flex: 1;
		min-width: 0;
		padding: 2px 3px;
	}

	.part-inner {
		flex: 1;
		min-width: 0;
		padding: 2px 3px;
		overflow: hidden;
		border-top: 1px solid #a0a0a0;
		border-left: 1px solid #a0a0a0;
		background: #fff;
	}

	.part-inner p {
		min-height: 15px;
		white-space: pre;
	}

	.part.selected .part-body {
		background: #c0c0c0;
	}

	.part.selected .part-inner {
		border: 1px solid #a0a0a0;
		background: repeating-linear-gradient(135deg, #fff 0 5px, #a0a0a0 5px 6px);
	}

	.part-inner b,
	.part-inner span {
		background: #fff;
		padding-right: 4px;
	}

	.scrollbar {
		display: flex;
		flex-direction: column;
		width: 15px;
		border-left: 1px solid #fff;
	}

	.scrollbar button {
		height: 17px;
	}

	.thumb {
		height: 257px;
		margin-bottom: auto;
		background: #cdcdcd;
	}

	.legend {
		display: flex;
		align-items: center;
		gap: 5px;
		height: 19px;
		margin-right: 2px;
		padding-left: 5px;
		border-left: 2px solid #8a8a8a;
		border-bottom: 1px solid #a0a0a0;
		background: #f0f0f0;
	}

	.key {
		width: 11px;
		height: 12px;
		background: #000;
	}

	.key.primary {
		background: #000080;
	}

	.mmc-status {
		display: flex;
		height: 25px;
		box-sizing: border-box;
		padding: 2px 2px 1px;
		border-top: 1px solid #d7d7d7;
		background: #f0f0f0;
	}

	.mmc-status span {
		width: 132px;
		border-right: 1px solid #d7d7d7;
	}

	.mmc-status span:first-child {
		flex: 1;
	}

	.mmc-status span:last-child {
		width: 85px;
	}

	.taskbar {
		display: flex;
		height: 40px;
		background: #1e1e1e;
		color: #fff;
		font-family: 'Segoe UI', 'Open Sans', sans-serif;
		font-size: 11px;
	}

	.start,
	.task {
		width: 48px;
	}

	.search {
		display: flex;
		align-items: center;
		box-sizing: border-box;
		gap: 11px;
		width: 320px;
		padding: 0 11px;
		border: 1px solid #5c5c5c;
		background: #333;
	}

	.search input {
		flex: 1;
		min-width: 0;
		padding: 0;
		border: none;
		outline: none;
		background: none;
		color: #fff;
		font: inherit;
		font-size: 14px;
	}

	.search input::placeholder {
		color: #d4d4d4;
	}

	.task {
		margin-left: 1px;
		border-bottom: 2px solid transparent;
	}

	.task.active {
		background: #4c4c4c;
		border-bottom-color: #76b9ed;
	}

	.tray {
		display: flex;
		align-items: center;
		gap: 9px;
		margin-left: auto;
	}

	.clock {
		display: flex;
		flex-direction: column;
		width: 70px;
		line-height: 18px;
		text-align: center;
	}

	.peek {
		width: 4px;
		height: 40px;
		margin-left: 10px;
		border-left: 1px solid #6a6a6a;
	}
</style>
